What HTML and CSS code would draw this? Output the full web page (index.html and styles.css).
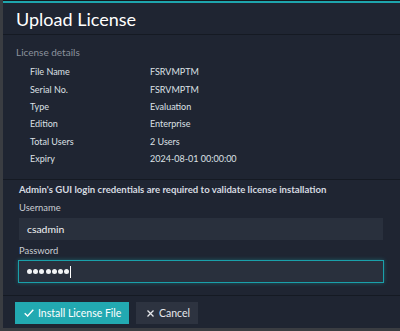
FILE: index.html
```html
<!DOCTYPE html>
<html lang="en">
<head>
  <meta charset="UTF-8" />
  <title>Upload License</title>
  <link rel="stylesheet" href="styles.css">
</head>
<body>
  <div class="dialog">
    <div class="header">
      <h1>Upload License</h1>
    </div>

    <div class="details">
      <div class="section-title">License details</div>
      <table class="info">
        <tr><td>File Name</td><td>FSRVMPTM</td></tr>
        <tr><td>Serial No.</td><td>FSRVMPTM</td></tr>
        <tr><td>Type</td><td>Evaluation</td></tr>
        <tr><td>Edition</td><td>Enterprise</td></tr>
        <tr><td>Total Users</td><td>2 Users</td></tr>
        <tr><td>Expiry</td><td>2024-08-01 00:00:00</td></tr>
      </table>
    </div>

    <div class="creds">
      <div class="notice">Admin's GUI login credentials are required to validate license installation</div>
      <label class="field-label">Username</label>
      <div class="input">csadmin</div>
      <label class="field-label">Password</label>
      <div class="input focused">
        <span class="dot"></span><span class="dot"></span><span class="dot"></span><span class="dot"></span><span class="dot"></span><span class="dot"></span><span class="dot"></span><span class="caret"></span>
      </div>
    </div>

    <div class="footer">
      <button class="btn primary">
        <svg width="10" height="8" viewBox="0 0 10 8"><path d="M0.7 4.2 L3.6 7 L9.3 0.8" fill="none" stroke="#fff" stroke-width="1.4"/></svg>
        <span>Install License File</span>
      </button>
      <button class="btn cancel">
        <svg width="7" height="7" viewBox="0 0 7 7"><path d="M0.5 0.5 L6.5 6.5 M6.5 0.5 L0.5 6.5" fill="none" stroke="#e6e8ec" stroke-width="1.3"/></svg>
        <span>Cancel</span>
      </button>
    </div>
  </div>
</body>
</html>
```

FILE: styles.css
```css
body {
  margin: 0;
  background: #3a3d42;
  font-family: 'Lato', 'Open Sans', sans-serif;
  color: #e3e6ea;
}

.dialog {
  margin-left: 3px;
  height: 328px;
  box-sizing: border-box;
  border-top: 1px solid #15181d;
  background: #1f2532;
  display: flex;
  flex-direction: column;
}

.header {
  border-top: 2px solid #1ea5ad;
  border-bottom: 1px solid #151a23;
  height: 31px;
  padding-left: 13px;
  display: flex;
  align-items: center;
}

.header h1 {
  margin: 0;
  font-size: 18px;
  font-weight: 400;
  color: #ffffff;
}

.details {
  padding: 10px 13px 0;
  height: 134px;
  border-bottom: 1px solid #151a23;
}

.section-title {
  font-size: 10px;
  line-height: 14px;
  color: #8b929d;
  margin-bottom: 4px;
}

.info {
  border-collapse: collapse;
  font-size: 9px;
  color: #dde0e5;
}

.info td {
  height: 17.4px;
  padding: 0;
}

.info td:first-child {
  width: 134px;
  box-sizing: border-box;
  padding-left: 14px;
}

.creds {
  padding: 3px 16px 0;
  height: 112px;
  border-bottom: 1px solid #151a23;
}

.notice {
  font-size: 9.6px;
  line-height: 14px;
  font-weight: 700;
  color: #d6dae0;
  margin-bottom: 4px;
}

.field-label {
  display: block;
  font-size: 9.4px;
  line-height: 14px;
  color: #c9cdd3;
  margin-bottom: 3px;
}

.input {
  height: 22px;
  margin-bottom: 4px;
  margin-right: 1px;
  background: #29303d;
  font-size: 10.4px;
  color: #f1f3f5;
  padding-left: 8px;
  display: flex;
  align-items: center;
}

.input.focused {
  height: 23px;
  box-sizing: border-box;
  margin-top: -1px;
  margin-left: -1px;
  margin-right: 0;
  border: 1px solid #1aa0aa;
  box-shadow: 0 0 4px rgba(30, 170, 180, 0.45);
  padding-left: 8px;
}

.dot {
  width: 5px;
  height: 5px;
  border-radius: 50%;
  background: #f1f3f5;
  margin-right: 1.2px;
}

.caret {
  width: 1px;
  height: 12px;
  background: #ffffff;
}

.footer {
  flex: 1;
  padding: 6px 12px 0;
  display: flex;
  gap: 7px;
  align-items: flex-start;
}

.btn {
  height: 22px;
  padding: 0 8px 0 9px;
  border: none;
  background: #2d3340;
  color: #e6e8ec;
  font-family: 'Lato', sans-serif;
  font-size: 10.5px;
  white-space: nowrap;
  display: flex;
  align-items: center;
  gap: 4px;
}

.btn svg {
  flex-shrink: 0;
}

.btn.primary {
  width: 114px;
  background: #22a9b1;
  color: #ffffff;
}

.btn.cancel {
  width: 62px;
  padding: 0 8px 0 11px;
  gap: 5px;
}
```
